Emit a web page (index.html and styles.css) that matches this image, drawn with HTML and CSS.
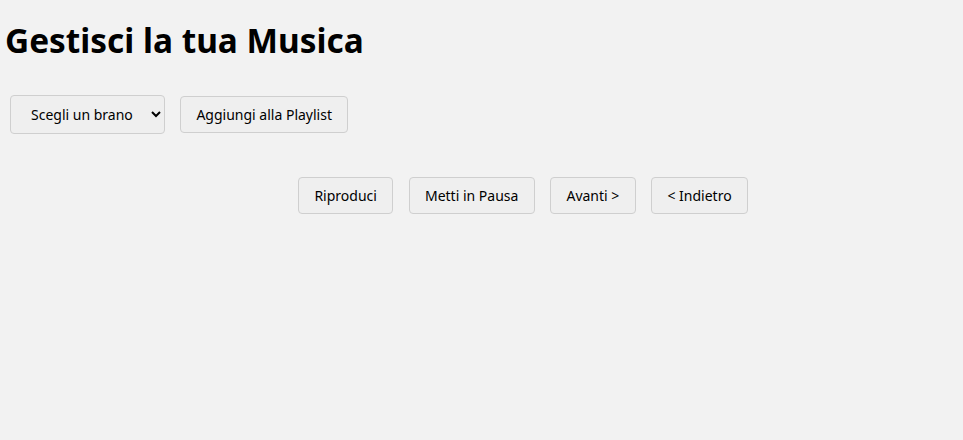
FILE: index.html
```html
<!DOCTYPE html>
<html lang="it">
<head>
    <meta charset="UTF-8">
    <meta name="viewport" content="width=device-width, initial-scale=1.0">
    <title>Gestisci la tua Musica</title>
    <link rel="stylesheet" href="styles.css">
</head>
<body>
    <h1>Gestisci la tua Musica</h1>

    <div class="playlist-form">
        <select id="songSelect" class="control">
            <option>Scegli un brano</option>
        </select>
        <button class="control">Aggiungi alla Playlist</button>
    </div>

    <div class="player-controls">
        <button class="control">Riproduci</button>
        <button class="control">Metti in Pausa</button>
        <button class="control">Avanti &gt;</button>
        <button class="control">&lt; Indietro</button>
    </div>
</body>
</html>
```

FILE: styles.css
```css
* {
    margin: 0;
    padding: 0;
    box-sizing: border-box;
    font-family: "Noto Sans", sans-serif;
}

body {
    background-color: #f2f2f2;
    color: #000;
    padding: 18px 5px;
}

h1 {
    font-size: 33.4px;
    font-weight: bold;
    line-height: 44px;
}

.playlist-form {
    display: flex;
    align-items: center;
    gap: 15px;
    margin: 33px 0 0 5px;
}

.player-controls {
    display: flex;
    gap: 15.3px;
    margin: 43px 0 0 293px;
}

.control {
    height: 37px;
    padding: 0 15.4px;
    font-size: 14px;
    color: #000;
    background-color: #efefef;
    border: 1px solid #cfcfcf;
    border-radius: 4px;
}

select.control {
    width: 155px;
    height: 39px;
    padding: 0 8px 0 16px;
}
```
